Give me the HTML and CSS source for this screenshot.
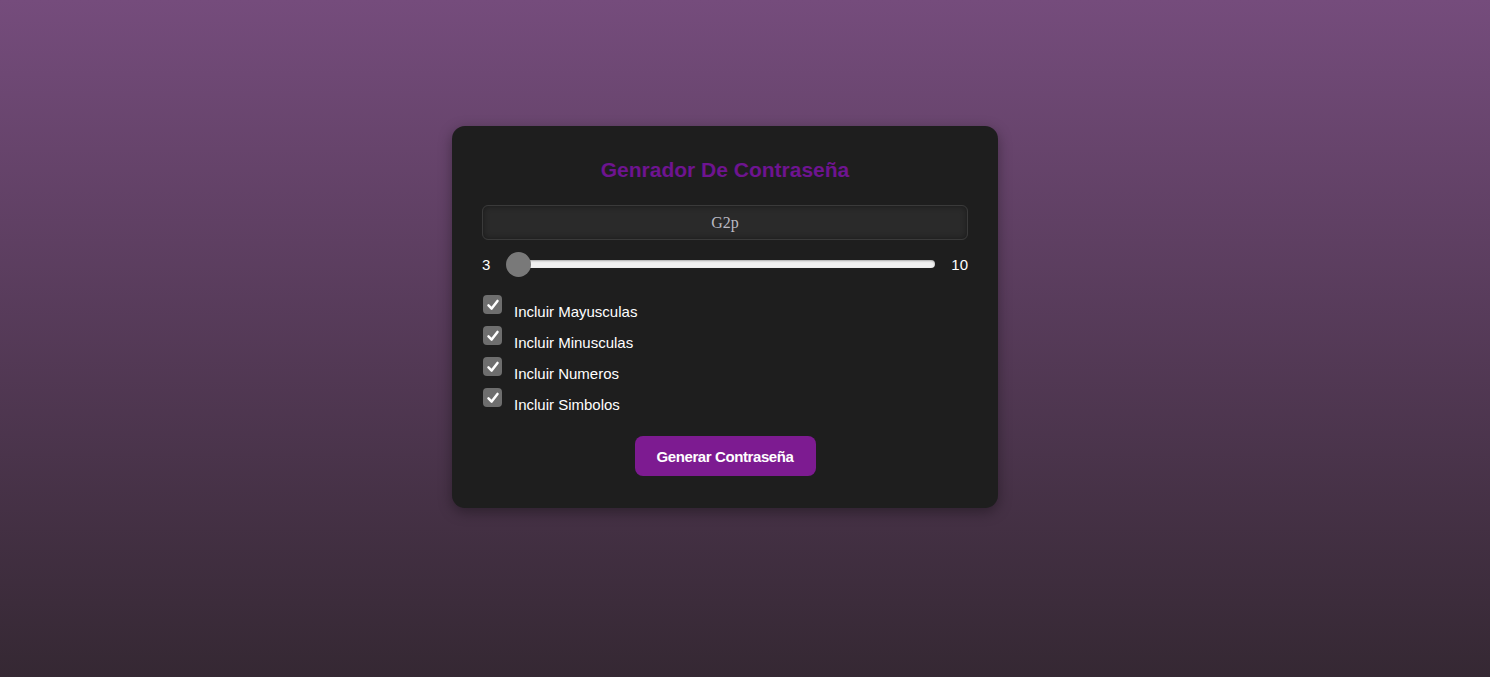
FILE: index.html
```html
<!DOCTYPE html>
<html lang="es">
<head>
<meta charset="utf-8">
<title>Generador De Contraseña</title>
<link rel="stylesheet" href="styles.css">
</head>
<body>
<div class="card">
  <h1 class="title">Genrador De Contraseña</h1>
  <div class="output">G2p</div>
  <div class="range-row">
    <span class="num">3</span>
    <div class="slider">
      <div class="track"></div>
      <div class="thumb"></div>
    </div>
    <span class="num">10</span>
  </div>
  <div class="options">
    <label class="opt"><span class="box"><svg viewBox="0 0 20 20" width="20" height="20"><path d="M5 10.5 L8.5 14 L15 5.5" fill="none" stroke="#fff" stroke-width="2.8" stroke-linecap="round" stroke-linejoin="round"/></svg></span><span class="lbl">Incluir Mayusculas</span></label>
    <label class="opt"><span class="box"><svg viewBox="0 0 20 20" width="20" height="20"><path d="M5 10.5 L8.5 14 L15 5.5" fill="none" stroke="#fff" stroke-width="2.8" stroke-linecap="round" stroke-linejoin="round"/></svg></span><span class="lbl">Incluir Minusculas</span></label>
    <label class="opt"><span class="box"><svg viewBox="0 0 20 20" width="20" height="20"><path d="M5 10.5 L8.5 14 L15 5.5" fill="none" stroke="#fff" stroke-width="2.8" stroke-linecap="round" stroke-linejoin="round"/></svg></span><span class="lbl">Incluir Numeros</span></label>
    <label class="opt"><span class="box"><svg viewBox="0 0 20 20" width="20" height="20"><path d="M5 10.5 L8.5 14 L15 5.5" fill="none" stroke="#fff" stroke-width="2.8" stroke-linecap="round" stroke-linejoin="round"/></svg></span><span class="lbl">Incluir Simbolos</span></label>
  </div>
  <div class="actions">
    <button class="btn">Generar Contraseña</button>
  </div>
</div>
</body>
</html>
```
FILE: styles.css
```css
html, body {
  margin: 0;
  height: 100%;
}
body {
  background: linear-gradient(to bottom, #754c7c 0%, #352833 100%);
  font-family: "Liberation Sans", Arial, sans-serif;
  display: flex;
  justify-content: center;
  align-items: flex-start;
  padding-top: 126px;
  box-sizing: border-box;
}
.card {
  width: 546px;
  height: 382px;
  box-sizing: border-box;
  background: #1e1e1e;
  border-radius: 13px;
  box-shadow: 0 4px 14px rgba(0, 0, 0, 0.35);
  padding: 30px 30px 0 30px;
  margin-right: 40px;
}
.title {
  margin: 0;
  text-align: center;
  color: #6e1490;
  font-size: 21px;
  font-weight: bold;
  letter-spacing: 0;
  line-height: 28px;
  height: 28px;
}
.output {
  margin-top: 21px;
  height: 35px;
  box-sizing: border-box;
  background: #2a2a2a;
  border: 1px solid #3a3a3a;
  border-radius: 6px;
  box-shadow: inset 0 0 6px rgba(0, 0, 0, 0.4);
  color: #b9b9c2;
  font-family: "Liberation Serif", "Times New Roman", serif;
  font-size: 16px;
  text-align: center;
  line-height: 33px;
}
.range-row {
  display: flex;
  align-items: center;
  height: 28px;
  margin-top: 10px;
}
.num {
  color: #ffffff;
  font-size: 15px;
  width: 16px;
}
.range-row .num:last-child {
  width: auto;
  margin-left: 16px;
}
.slider {
  flex: 1;
  position: relative;
  height: 28px;
  margin-left: 8px;
}
.track {
  position: absolute;
  left: 12px;
  right: 0;
  top: 50%;
  height: 8px;
  margin-top: -4px;
  background: #f0f0f0;
  border-radius: 4px;
  box-shadow: inset 0 1px 2px rgba(0, 0, 0, 0.3);
}
.thumb {
  position: absolute;
  left: 0;
  top: 50%;
  width: 25px;
  height: 25px;
  margin-top: -12.5px;
  border-radius: 50%;
  background: #797979;
}
.options {
  margin-top: 17px;
  display: flex;
  flex-direction: column;
  gap: 11px;
}
.opt {
  display: flex;
  align-items: flex-start;
  height: 20px;
  cursor: pointer;
}
.box {
  width: 19px;
  height: 19px;
  margin-left: 1px;
  background: #6e6e6e;
  border-radius: 4px;
  display: flex;
  align-items: center;
  justify-content: center;
}
.box svg {
  width: 18px;
  height: 18px;
}
.lbl {
  margin-left: 12px;
  margin-top: 8px;
  color: #ffffff;
  font-size: 15px;
  letter-spacing: 0;
  line-height: 18px;
}
.actions {
  display: flex;
  justify-content: center;
  margin-top: 28px;
}
.btn {
  width: 181px;
  height: 40px;
  background: #7d1b91;
  color: #ffffff;
  border: none;
  border-radius: 8px;
  font-family: "Liberation Sans", Arial, sans-serif;
  font-size: 15px;
  font-weight: bold;
  letter-spacing: -0.4px;
  cursor: pointer;
}
```
